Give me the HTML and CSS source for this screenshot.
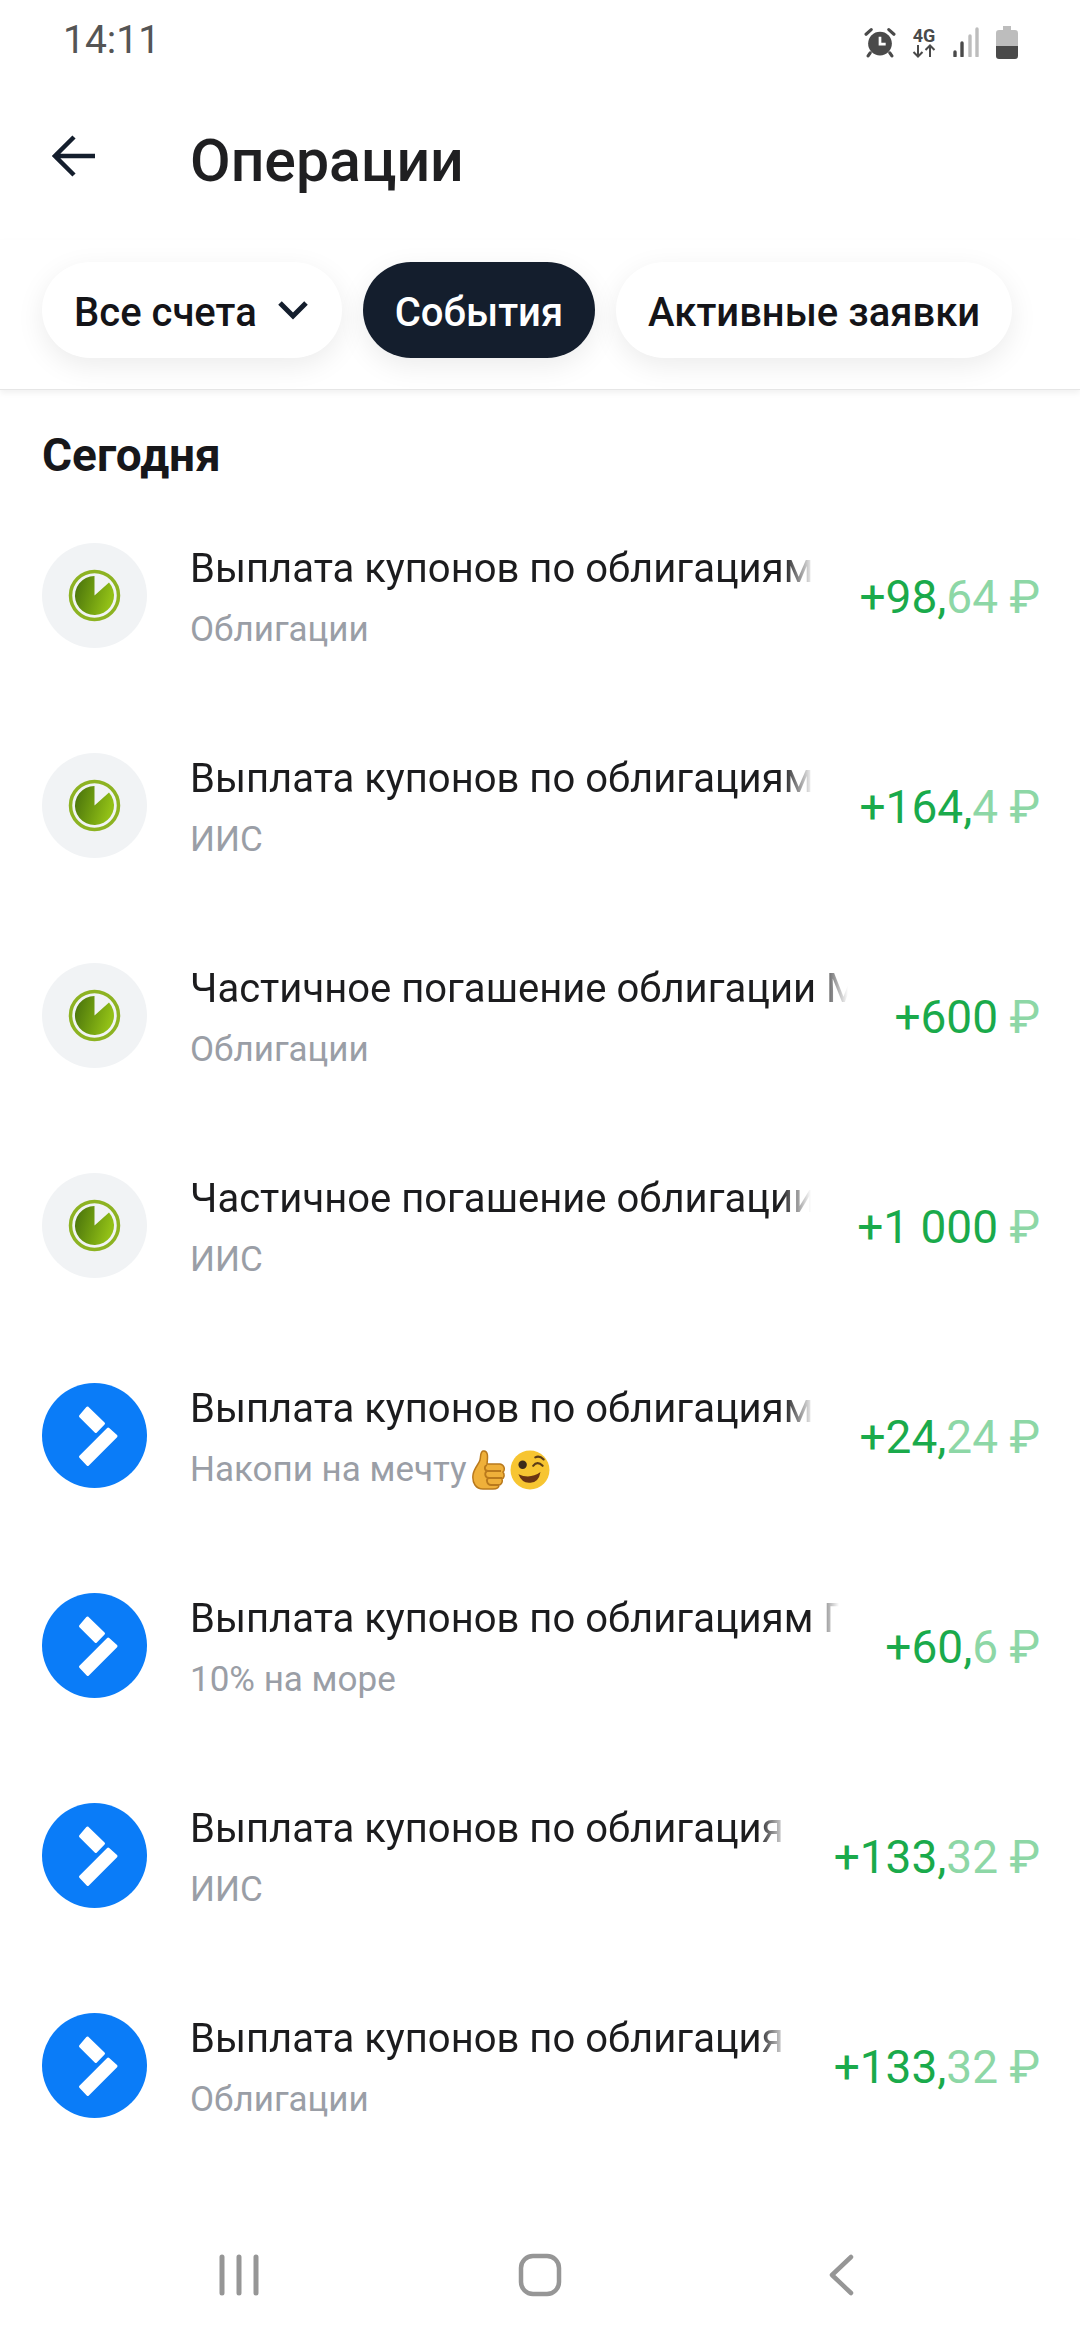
FILE: index.html
```html
<!DOCTYPE html>
<html lang="ru">
<head>
  <meta charset="UTF-8">
  <title>Операции</title>
  <link rel="stylesheet" href="styles.css">
</head>
<body>
<svg class="defs" width="0" height="0">
  <defs>
    <linearGradient id="pie-fill" x1="0" y1="0" x2="1" y2="0.300">
      <stop offset="0" stop-color="#466f0c"/>
      <stop offset="0.550" stop-color="#6f9c10"/>
      <stop offset="1" stop-color="#92c017"/>
    </linearGradient>
  </defs>
  <symbol id="logo-green" viewBox="0 0 105 105">
    <circle cx="52.5" cy="52.5" r="52.5" fill="#f1f3f5"/>
    <circle cx="52.5" cy="52.5" r="24" fill="none" stroke="#8db322" stroke-width="3.5"/>
    <path d="M52.5 52.5V33A19.5 19.5 0 1 0 67 39.5Z" fill="url(#pie-fill)"/>
  </symbol>
  <symbol id="logo-blue" viewBox="0 0 105 105">
    <circle cx="52.5" cy="52.5" r="52.5" fill="#0a7cf8"/>
    <path d="M45.5 25L61.5 40.5L53.8 48.5L38.5 33.2Z" fill="#fff" stroke="#fff" stroke-width="3" stroke-linejoin="round"/>
    <path d="M66.2 46L74 53.2L45.8 81.5L38.5 73.8Z" fill="#fff" stroke="#fff" stroke-width="3" stroke-linejoin="round"/>
  </symbol>
</svg>

<div class="page">
  <div class="statusbar">
    <span class="time">14:11</span>
    <div class="status-icons">
      <svg class="ic-alarm" width="32" height="31" viewBox="0 0 30 30">
        <circle cx="15" cy="16" r="11.5" fill="#4a4a4a"/>
        <path d="M15 9.5V16.5H20.5" fill="none" stroke="#fff" stroke-width="2.6"/>
        <path d="M1.5 7L6.5 2.5M28.5 7L23.5 2.5M5.5 25L3.5 28M24.5 25L26.5 28" stroke="#4a4a4a" stroke-width="3" stroke-linecap="round"/>
      </svg>
      <div class="net">
        <span class="net-label">4G</span>
        <svg width="24" height="14" viewBox="0 0 24 14">
          <path d="M6 1V12M1.5 8L6 12.5L10.500 8M18 13V2M13.500 6L18 1.500L22.500 6" fill="none" stroke="#4a4a4a" stroke-width="2"/>
        </svg>
      </div>
      <svg width="28" height="30" viewBox="0 0 28 30">
        <path d="M3 29V25" stroke="#4a4a4a" stroke-width="3.400" stroke-linecap="round"/>
        <path d="M10 29V16" stroke="#4a4a4a" stroke-width="3.400" stroke-linecap="round"/>
        <path d="M18 29V9" stroke="#bdbdbd" stroke-width="3.400" stroke-linecap="round"/>
        <path d="M25 29V2" stroke="#bdbdbd" stroke-width="3.400" stroke-linecap="round"/>
      </svg>
      <svg width="22" height="33" viewBox="0 0 22 33">
        <path d="M7 0H15V4H19Q22 4 22 7V20H0V7Q0 4 3 4H7Z" fill="#bdbdbd"/>
        <path d="M0 20H22V30Q22 33 19 33H3Q0 33 0 30Z" fill="#4a4a4a"/>
      </svg>
    </div>
  </div>

  <div class="topbar">
    <svg class="back" width="44" height="42" viewBox="0 0 44 42">
      <path d="M22 2L3 21L22 40M3 21H43" fill="none" stroke="#141e2d" stroke-width="4.500"/>
    </svg>
    <h1 class="title">Операции</h1>
  </div>

  <div class="chips">
    <div class="chip chip-select">Все счета
      <svg width="32" height="20" viewBox="0 0 32 20">
        <path d="M3 3L16 16L29 3" fill="none" stroke="#141e2d" stroke-width="5"/>
      </svg>
    </div>
    <div class="chip chip-active">События</div>
    <div class="chip">Активные заявки</div>
  </div>

  <div class="content">
    <h2 class="section">Сегодня</h2>

    <div class="row">
      <svg class="logo"><use href="#logo-green"/></svg>
      <div class="info">
        <div class="name">Выплата купонов по облигациям</div>
        <div class="sub">Облигации</div>
      </div>
      <div class="amount">+98,<span class="dim">64 ₽</span></div>
    </div>

    <div class="row">
      <svg class="logo"><use href="#logo-green"/></svg>
      <div class="info">
        <div class="name">Выплата купонов по облигациям</div>
        <div class="sub">ИИС</div>
      </div>
      <div class="amount">+164,<span class="dim">4 ₽</span></div>
    </div>

    <div class="row">
      <svg class="logo"><use href="#logo-green"/></svg>
      <div class="info">
        <div class="name">Частичное погашение облигации М</div>
        <div class="sub">Облигации</div>
      </div>
      <div class="amount">+600 <span class="dim">₽</span></div>
    </div>

    <div class="row">
      <svg class="logo"><use href="#logo-green"/></svg>
      <div class="info">
        <div class="name">Частичное погашение облигации</div>
        <div class="sub">ИИС</div>
      </div>
      <div class="amount">+1 000 <span class="dim">₽</span></div>
    </div>

    <div class="row">
      <svg class="logo"><use href="#logo-blue"/></svg>
      <div class="info">
        <div class="name">Выплата купонов по облигациям</div>
        <div class="sub sub-emoji">Накопи на мечту
          <svg width="35" height="40" viewBox="0 0 35 40">
            <path d="M12 1C17 0 17 6 16 14H29C34 15 34 20 32 22C34 25 33 28 31 29C32 32 30 35 28 35C28 38 25 39 22 39H12C5 39 1 33 2 25C3 18 8 14 9 10C10 6 9 2 12 1Z" fill="#efb03a" stroke="#b9791c" stroke-width="1.500"/>
            <path d="M16 15C13 16 13 21 17 21H30M16 21C13 23 14 28 18 28H31M17 28C15 30 16 35 20 35H28" fill="none" stroke="#b9791c" stroke-width="1.800"/>
          </svg>
          <svg width="40" height="40" viewBox="0 0 38 38">
            <circle cx="19" cy="19" r="18.500" fill="#f7c531"/>
            <circle cx="12" cy="14" r="4" fill="#3b2a1a"/>
            <path d="M22 15Q26 10 31 15M24 7Q28 5 32 9" fill="none" stroke="#5c3d17" stroke-width="2" stroke-linecap="round"/>
            <path d="M8 23Q19 28 29 21Q27 32 18 31Q11 31 8 23Z" fill="#6b3413"/>
          </svg>
        </div>
      </div>
      <div class="amount">+24,<span class="dim">24 ₽</span></div>
    </div>

    <div class="row">
      <svg class="logo"><use href="#logo-blue"/></svg>
      <div class="info">
        <div class="name">Выплата купонов по облигациям Г</div>
        <div class="sub">10% на море</div>
      </div>
      <div class="amount">+60,<span class="dim">6 ₽</span></div>
    </div>

    <div class="row">
      <svg class="logo"><use href="#logo-blue"/></svg>
      <div class="info">
        <div class="name">Выплата купонов по облигация</div>
        <div class="sub">ИИС</div>
      </div>
      <div class="amount">+133,<span class="dim">32 ₽</span></div>
    </div>

    <div class="row">
      <svg class="logo"><use href="#logo-blue"/></svg>
      <div class="info">
        <div class="name">Выплата купонов по облигация</div>
        <div class="sub">Облигации</div>
      </div>
      <div class="amount">+133,<span class="dim">32 ₽</span></div>
    </div>
  </div>

  <div class="navbar">
    <svg width="40" height="42" viewBox="0 0 40 42">
      <path d="M3 3V39M20 3V39M37 3V39" stroke="#969696" stroke-width="5" stroke-linecap="round"/>
    </svg>
    <svg width="44" height="44" viewBox="0 0 44 44">
      <rect x="3" y="3" width="38" height="38" rx="12" fill="none" stroke="#969696" stroke-width="4.500"/>
    </svg>
    <svg width="26" height="42" viewBox="0 0 26 42">
      <path d="M23 3L4 21L23 39" fill="none" stroke="#969696" stroke-width="4.500" stroke-linecap="round" stroke-linejoin="round"/>
    </svg>
  </div>
</div>
</body>
</html>
```

FILE: styles.css
```css
* {
  box-sizing: border-box;
}

body {
  margin: 0;
  background: #fff;
  font-family: Roboto, "Noto Sans", sans-serif;
  color: #1c1c1e;
}

.defs {
  display: block;
  height: 0;
}

.page {
  width: 1080px;
  height: 2340px;
  display: flex;
  flex-direction: column;
  overflow: hidden;
}

/* status bar */
.statusbar {
  height: 80px;
  padding: 0 62px 0 63px;
  display: flex;
  align-items: center;
  justify-content: space-between;
}

.time {
  font-size: 39px;
  color: #555;
}

.status-icons {
  display: flex;
  align-items: center;
  gap: 16px;
  padding-top: 4px;
}

.net {
  display: flex;
  flex-direction: column;
  align-items: center;
  width: 24px;
}

.net-label {
  font-size: 18px;
  line-height: 17px;
  font-weight: 700;
  color: #4a4a4a;
}

/* header */
.topbar {
  height: 160px;
  padding-left: 52px;
  display: flex;
  align-items: center;
  gap: 94px;
}

.back {
  margin-bottom: 8px;
}

.title {
  margin: 0;
  font-size: 59px;
  font-weight: 500;
  color: #1f1f21;
}

.chips {
  height: 150px;
  padding: 22px 42px 0;
  display: flex;
  gap: 21px;
  align-items: flex-start;
  border-bottom: 1px solid #e6e6e6;
  box-shadow: 0 3px 6px rgba(0, 0, 0, 0.06);
}

.chip {
  height: 96px;
  padding: 4px 32px 0;
  border-radius: 48px;
  background: #fff;
  box-shadow: 0 8px 28px rgba(0, 0, 0, 0.08);
  display: flex;
  align-items: center;
  gap: 20px;
  font-size: 40px;
  font-weight: 500;
  color: #141418;
}

.chip-select svg {
  margin: -4px 1px 0 0;
}

.chip-active {
  background: #141e2d;
  color: #fff;
}

/* list */
.content {
  flex: 1;
  padding: 0 40px 0 42px;
}

.section {
  height: 100px;
  margin: 0;
  padding-top: 40px;
  font-size: 46px;
  line-height: 50px;
  font-weight: 700;
  color: #17171a;
}

.row {
  height: 210px;
  display: flex;
  align-items: center;
}

.logo {
  width: 105px;
  height: 105px;
  flex: none;
  margin-right: 43px;
}

.info {
  flex: 1;
  min-width: 0;
  margin-right: 46px;
  padding-top: 6px;
}

.name {
  font-size: 40px;
  line-height: 46px;
  white-space: nowrap;
  overflow: hidden;
  color: #1c1c1e;
  -webkit-mask-image: linear-gradient(to left, transparent 0, #000 30px);
  mask-image: linear-gradient(to left, transparent 0, #000 30px);
}

.sub {
  margin-top: 18px;
  font-size: 35px;
  line-height: 40px;
  color: #9a9ea6;
  white-space: nowrap;
}

.sub-emoji {
  display: flex;
  align-items: center;
  gap: 4px;
}

.amount {
  flex: none;
  margin-top: 4px;
  font-size: 46px;
  color: #1aaa4b;
  white-space: nowrap;
}

.dim {
  color: #8dd7a6;
}

/* android nav */
.navbar {
  height: 130px;
  padding: 0 88px;
  display: grid;
  grid-template-columns: repeat(3, 1fr);
  justify-items: center;
  align-items: center;
}
```
